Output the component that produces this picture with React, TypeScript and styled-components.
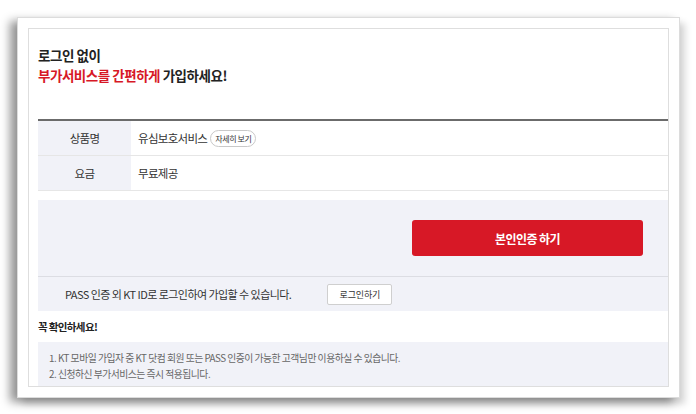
import React from 'react';
import styled, { createGlobalStyle } from 'styled-components';

const GlobalStyle = createGlobalStyle`
  html, body {
    margin: 0;
    padding: 0;
    background: #ffffff;
  }
  body {
    font-family: 'Noto Sans CJK KR', 'Noto Sans', sans-serif;
    color: #333;
  }
  * {
    box-sizing: border-box;
  }
`;

const Page = styled.div`
  width: 696px;
  height: 414px;
  padding: 17px 16px 16px 17px;
`;

const Sheet = styled.div`
  width: 663px;
  height: 381px;
  padding: 10px;
  background: #fff;
  border: 1px solid #dcdcdc;
  box-shadow: -7px 4px 9px rgba(0, 0, 0, 0.42), 5px 6px 7px rgba(0, 0, 0, 0.16);
`;

const Inner = styled.div`
  height: 100%;
  border: 1px solid #dedede;
  padding: 16px 0 0 9px;
  display: flex;
  flex-direction: column;
`;

const Title = styled.h2`
  margin: 0;
  font-size: 13.5px;
  line-height: 20px;
  font-weight: 700;
  color: #222;
  letter-spacing: -0.035em;
`;

const Red = styled.span`
  color: #d71826;
`;

const Table = styled.div`
  margin-top: 34px;
  border-top: 2px solid #6b6b6b;
`;

const TableRow = styled.div`
  display: grid;
  grid-template-columns: 93px 1fr;
  height: 35px;
  border-bottom: 1px solid #e6e6e6;
`;

const Label = styled.div`
  background: #f1f2f8;
  display: flex;
  align-items: center;
  justify-content: center;
  font-size: 11.5px;
  color: #333;
  letter-spacing: -0.06em;
`;

const Value = styled.div`
  display: flex;
  align-items: center;
  gap: 3px;
  padding-left: 7px;
  font-size: 11.5px;
  color: #333;
  letter-spacing: -0.06em;
`;

const Pill = styled.span`
  display: inline-flex;
  align-items: center;
  height: 17px;
  padding: 0 4px;
  border: 1px solid #c9c9c9;
  border-radius: 9px;
  font-size: 8px;
  color: #333;
  letter-spacing: -0.05em;
  background: #fff;
`;

const AuthBox = styled.div`
  margin-top: 9px;
  background: #f1f2f8;
`;

const AuthTop = styled.div`
  display: flex;
  justify-content: flex-end;
  padding: 20px 25px 20px 0;
  border-bottom: 1px solid #dcdde3;
`;

const PrimaryButton = styled.button`
  width: 231px;
  height: 36px;
  border: none;
  border-radius: 3px;
  background: #d71826;
  color: #fff;
  font-family: inherit;
  font-size: 12px;
  font-weight: 700;
  letter-spacing: -0.05em;
`;

const AuthBottom = styled.div`
  display: flex;
  align-items: center;
  gap: 36px;
  height: 34px;
  padding-left: 27px;
  font-size: 11px;
  color: #333;
  letter-spacing: -0.05em;
`;

const SmallButton = styled.button`
  width: 65px;
  height: 21px;
  border: 1px solid #cfcfcf;
  border-radius: 2px;
  background: #fff;
  font-family: inherit;
  font-size: 9px;
  color: #333;
  letter-spacing: -0.02em;
  padding: 0;
`;

const NoticeTitle = styled.div`
  height: 31px;
  display: flex;
  align-items: center;
  font-size: 10.5px;
  font-weight: 700;
  color: #222;
  letter-spacing: -0.06em;
`;

const NoticeBox = styled.ul`
  flex: 1;
  margin: 0;
  padding: 8px 0 0 11px;
  list-style: none;
  background: #f1f2f8;
`;

const NoticeItem = styled.li`
  font-size: 9.8px;
  line-height: 16px;
  color: #666;
  letter-spacing: -0.05em;
`;

const notices = [
  '1. KT 모바일 가입자 중 KT 닷컴 회원 또는 PASS 인증이 가능한 고객님만 이용하실 수 있습니다.',
  '2. 신청하신 부가서비스는 즉시 적용됩니다.',
];

export default function App() {
  return (
    <>
      <GlobalStyle />
      <Page>
        <Sheet>
          <Inner>
            <Title>
              로그인 없이
              <br />
              <Red>부가서비스를 간편하게</Red> 가입하세요!
            </Title>
            <Table>
              <TableRow>
                <Label>상품명</Label>
                <Value>
                  유심보호서비스 <Pill>자세히 보기</Pill>
                </Value>
              </TableRow>
              <TableRow>
                <Label>요금</Label>
                <Value>무료제공</Value>
              </TableRow>
            </Table>
            <AuthBox>
              <AuthTop>
                <PrimaryButton>본인인증 하기</PrimaryButton>
              </AuthTop>
              <AuthBottom>
                <span>PASS 인증 외 KT ID로 로그인하여 가입할 수 있습니다.</span>
                <SmallButton>로그인하기</SmallButton>
              </AuthBottom>
            </AuthBox>
            <NoticeTitle>꼭 확인하세요!</NoticeTitle>
            <NoticeBox>
              {notices.map((n) => (
                <NoticeItem key={n}>{n}</NoticeItem>
              ))}
            </NoticeBox>
          </Inner>
        </Sheet>
      </Page>
    </>
  );
}
